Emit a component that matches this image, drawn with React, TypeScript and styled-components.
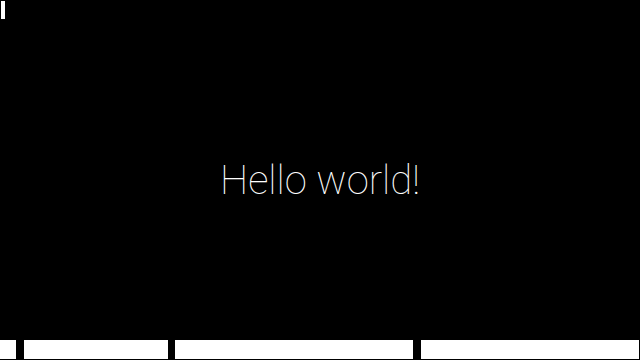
import React from 'react';
import styled, { createGlobalStyle } from 'styled-components';

const GlobalStyle = createGlobalStyle`
  html, body {
    margin: 0;
    padding: 0;
    background: #000;
  }
  #root {
    width: 640px;
    height: 360px;
  }
`;

const Screen = styled.div`
  width: 640px;
  height: 360px;
  background: #000;
  display: flex;
  flex-direction: column;
  overflow: hidden;
`;

const TopStrip = styled.div`
  height: 20px;
  padding: 1px 0 0 1px;
  box-sizing: border-box;
  display: flex;
  align-items: flex-start;
`;

const Cursor = styled.div`
  width: 4px;
  height: 18px;
  background: #fff;
`;

const Stage = styled.main`
  flex: 1;
  display: flex;
  align-items: center;
  justify-content: center;
`;

const Greeting = styled.h1`
  margin: 0;
  font-family: Roboto, "Liberation Sans", sans-serif;
  font-weight: 100;
  font-size: 40px;
  color: #fff;
`;

const BottomBar = styled.footer`
  height: 20px;
  padding-bottom: 1px;
  box-sizing: border-box;
  display: flex;
  gap: 7.5px;
`;

const Segment = styled.div<{ $w: number }>`
  width: ${(p) => p.$w}px;
  flex-shrink: 0;
  background: #fff;
`;

const segments = [16, 144, 238, 218];

const App: React.FC = () => {
  return (
    <>
      <GlobalStyle />
      <Screen>
        <TopStrip>
          <Cursor />
        </TopStrip>
        <Stage>
          <Greeting>Hello world!</Greeting>
        </Stage>
        <BottomBar>
          {segments.map((w, i) => (
            <Segment key={i} $w={w} />
          ))}
        </BottomBar>
      </Screen>
    </>
  );
};

export default App;
